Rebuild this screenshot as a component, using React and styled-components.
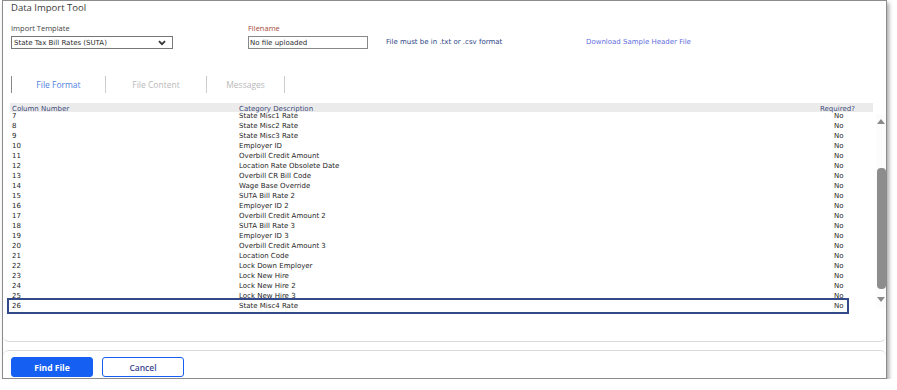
import React from 'react';
import styled, { createGlobalStyle } from 'styled-components';

const Global = createGlobalStyle`
  html, body { margin: 0; padding: 0; background: #fff; }
  body { font-family: "DejaVu Sans", Verdana, sans-serif; }
`;

const Window = styled.div`
  margin-left: 2px;
  width: 883px;
  height: 377px;
  border: 1px solid #8c8c8c;
  box-shadow: 2px 3px 4px rgba(0, 0, 0, 0.35);
  display: flex;
  flex-direction: column;
  background: #fff;
`;

const Panel = styled.div`
  height: 341px;
  box-sizing: border-box;
  border-bottom: 1px solid #d9d9d9;
  border-radius: 0 0 6px 6px;
  display: flex;
  flex-direction: column;
`;

const Title = styled.div`
  font-family: "Open Sans", sans-serif;
  font-size: 9.5px;
  color: #3a3a3a;
  padding: 0 0 0 8px;
  height: 17px;
`;

const FormRow = styled.div`
  display: flex;
  align-items: flex-end;
  padding-left: 8px;
  margin-top: 5px;
  height: 26px;
`;

const Field = styled.div`
  display: flex;
  flex-direction: column;
  width: ${p => p.w}px;
`;

const Label = styled.div`
  font-family: "Open Sans", sans-serif;
  font-size: 7.5px;
  color: ${p => p.color || '#444'};
  height: 13px;
`;

const Select = styled.div`
  width: 152px;
  height: 11px;
  border: 1px solid #777;
  display: flex;
  align-items: center;
  justify-content: space-between;
  font-size: 7px;
  color: #2c2c2c;
  padding: 0 6px 0 2px;
`;

const Input = styled.div`
  width: 117px;
  height: 11px;
  border: 1px solid #888;
  font-size: 7px;
  color: #2c2c2c;
  display: flex;
  align-items: center;
  padding-left: 1px;
`;

const Note = styled.div`
  font-size: 7px;
  color: ${p => p.color};
  width: ${p => p.w}px;
  padding-bottom: 3px;
`;

const Tabs = styled.div`
  display: flex;
  padding-left: 8px;
  margin-top: 27px;
  height: 17px;
`;

const Tab = styled.div`
  box-sizing: border-box;
  width: ${p => p.w}px;
  border-left: 1px solid ${p => (p.first ? '#888' : '#ccc')};
  ${p => p.last && 'border-right: 1px solid #ccc;'}
  font-family: "Open Sans", sans-serif;
  font-size: 8.5px;
  color: ${p => (p.active ? '#4f7fe0' : '#b9b9b9')};
  display: flex;
  align-items: center;
  justify-content: center;
`;

const TableArea = styled.div`
  position: relative;
  margin-top: 10px;
  display: flex;
`;

const Table = styled.div`
  margin-left: 7px;
  width: 863px;
  height: 211px;
  overflow: hidden;
  font-size: 7px;
`;

const cols = 'grid-template-columns: 227px 1fr 53px;';

const HeadRow = styled.div`
  display: grid;
  ${cols}
  background: #ebebeb;
  height: 9px;
  line-height: 12px;
  color: #3c4a7a;
  padding-left: 2px;
  position: relative;
  z-index: 1;
`;

const Row = styled.div`
  display: grid;
  ${cols}
  height: 10px;
  line-height: 10px;
  color: #262626;
  padding-left: 2px;
`;

const Required = styled.span`
  padding-left: 14px;
`;

const Rows = styled.div`
  margin-top: -1px;
`;

const Highlight = styled.div`
  position: absolute;
  left: 4px;
  top: 195px;
  width: 838px;
  height: 12px;
  border: 2px solid #34498a;
`;

const Scrollbar = styled.div`
  width: 10px;
  margin-left: 3px;
  margin-top: 11px;
  height: 194px;
  display: flex;
  flex-direction: column;
  align-items: center;
  background: #fcfcfc;
`;

const Arrow = styled.div`
  width: 0;
  height: 0;
  border-left: 4px solid transparent;
  border-right: 4px solid transparent;
  ${p => (p.down ? 'border-top: 5px solid #8a8a8a;' : 'border-bottom: 5px solid #8a8a8a;')}
  margin-top: ${p => p.mt}px;
`;

const Thumb = styled.div`
  width: 9px;
  height: 121px;
  margin-top: 44px;
  background: #8d8d8d;
  border-radius: 4px;
`;

const Footer = styled.div`
  margin-top: 8px;
  border-top: 1px solid #d9d9d9;
  border-radius: 6px 6px 0 0;
  flex: 1;
  display: flex;
  align-items: flex-end;
  gap: 9px;
  padding: 0 0 1px 8px;
`;

const Button = styled.button`
  width: 82px;
  height: 20px;
  border-radius: 3px;
  font-family: "Open Sans", sans-serif;
  font-size: 8.5px;
  cursor: pointer;
  border: 1px solid #1560f2;
  background: ${p => (p.primary ? '#1560f2' : '#fff')};
  color: ${p => (p.primary ? '#fff' : '#3c4890')};
  font-weight: ${p => (p.primary ? 700 : 600)};
`;

const data = [
  [7, 'State Misc1 Rate'],
  [8, 'State Misc2 Rate'],
  [9, 'State Misc3 Rate'],
  [10, 'Employer ID'],
  [11, 'Overbill Credit Amount'],
  [12, 'Location Rate Obsolete Date'],
  [13, 'Overbill CR Bill Code'],
  [14, 'Wage Base Override'],
  [15, 'SUTA Bill Rate 2'],
  [16, 'Employer ID 2'],
  [17, 'Overbill Credit Amount 2'],
  [18, 'SUTA Bill Rate 3'],
  [19, 'Employer ID 3'],
  [20, 'Overbill Credit Amount 3'],
  [21, 'Location Code'],
  [22, 'Lock Down Employer'],
  [23, 'Lock New Hire'],
  [24, 'Lock New Hire 2'],
  [25, 'Lock New Hire 3'],
  [26, 'State Misc4 Rate'],
];

const Chevron = () => (
  <svg width="8" height="6" viewBox="0 0 8 6">
    <path d="M1 1.2 L4 4.2 L7 1.2" fill="none" stroke="#333" strokeWidth="1.8" />
  </svg>
);

export default function App() {
  return (
    <>
      <Global />
      <Window>
        <Panel>
          <Title>Data Import Tool</Title>
          <FormRow>
            <Field w={237}>
              <Label>Import Template</Label>
              <Select>
                <span>State Tax Bill Rates (SUTA)</span>
                <Chevron />
              </Select>
            </Field>
            <Field w={138}>
              <Label color="#a4493a">Filename</Label>
              <Input>No file uploaded</Input>
            </Field>
            <Note color="#2d4685" w={200}>File must be in .txt or .csv format</Note>
            <Note color="#5f6ee0" w={150}>Download Sample Header File</Note>
          </FormRow>
          <Tabs>
            <Tab w={94} first active>File Format</Tab>
            <Tab w={101}>File Content</Tab>
            <Tab w={79} last>Messages</Tab>
          </Tabs>
          <TableArea>
            <Table>
              <HeadRow>
                <span>Column Number</span>
                <span>Category Description</span>
                <span>Required?</span>
              </HeadRow>
              <Rows>
                {data.map(([n, d]) => (
                  <Row key={n}>
                    <span>{n}</span>
                    <span>{d}</span>
                    <Required>No</Required>
                  </Row>
                ))}
              </Rows>
            </Table>
            <Scrollbar>
              <Arrow mt={5} />
              <Thumb />
              <Arrow down mt={8} />
            </Scrollbar>
            <Highlight />
          </TableArea>
        </Panel>
        <Footer>
          <Button primary>Find File</Button>
          <Button>Cancel</Button>
        </Footer>
      </Window>
    </>
  );
}
